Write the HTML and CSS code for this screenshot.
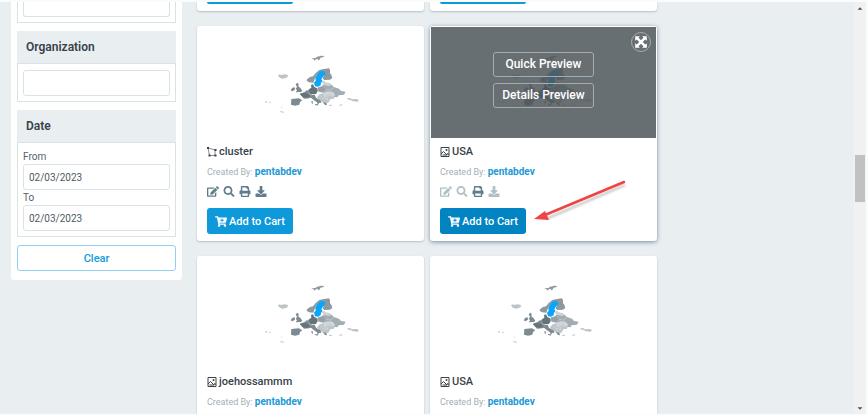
FILE: index.html
```html
<!DOCTYPE html>
<html lang="en">
<head>
    <meta charset="UTF-8">
    <meta name="viewport" content="width=device-width, initial-scale=1.0">
    <title>Add to Cart</title>
    <link rel="stylesheet" href="styles.css">
</head>
<body>

    <!-- Shared icons -->
    <svg class="sprite" aria-hidden="true">
        <symbol id="edit" viewBox="0 0 576 512"><path d="M402.6 83.2l90.2 90.2c3.8 3.8 3.8 10 0 13.8L274.4 405.6l-92.8 10.3c-12.4 1.4-22.9-9.1-21.5-21.5l10.3-92.8L388.8 83.2c3.8-3.8 10-3.8 13.8 0zm162-22.9l-48.8-48.8c-15.2-15.2-39.9-15.2-55.2 0l-35.4 35.4c-3.8 3.8-3.8 10 0 13.8l90.2 90.2c3.8 3.8 10 3.8 13.8 0l35.4-35.4c15.2-15.3 15.2-40 0-55.2zM384 346.2V448H64V128h229.8c3.2 0 6.2-1.3 8.5-3.5l40-40c7.6-7.6 2.2-20.5-8.5-20.5H48C21.5 64 0 85.5 0 112v352c0 26.5 21.5 48 48 48h352c26.5 0 48-21.5 48-48V306.2c0-10.7-12.9-16-20.5-8.5l-40 40c-2.2 2.3-3.5 5.3-3.5 8.5z"/></symbol>
        <symbol id="search" viewBox="0 0 512 512"><path d="M505 442.7L405.3 343c-4.5-4.5-10.6-7-17-7H372c27.6-35.3 44-79.7 44-128C416 93.1 322.9 0 208 0S0 93.1 0 208s93.1 208 208 208c48.3 0 92.7-16.4 128-44v16.3c0 6.4 2.5 12.5 7 17l99.7 99.7c9.4 9.4 24.6 9.4 33.9 0l28.3-28.3c9.4-9.4 9.4-24.6.1-34zM208 336c-70.7 0-128-57.2-128-128 0-70.7 57.2-128 128-128 70.7 0 128 57.2 128 128 0 70.7-57.2 128-128 128z"/></symbol>
        <symbol id="print" viewBox="0 0 512 512"><path d="M448 192V77.25c0-8.49-3.37-16.62-9.37-22.63L393.37 9.37c-6-6-14.14-9.37-22.63-9.37H96C78.33 0 64 14.33 64 32v160c-35.35 0-64 28.65-64 64v112c0 8.84 7.16 16 16 16h48v96c0 17.67 14.33 32 32 32h320c17.67 0 32-14.33 32-32v-96h48c8.84 0 16-7.16 16-16V256c0-35.35-28.65-64-64-64zm-64 256H128v-96h256v96zm0-224H128V64h192v48c0 8.84 7.16 16 16 16h48v96z"/></symbol>
        <symbol id="download" viewBox="0 0 512 512"><path d="M216 0h80c13.3 0 24 10.7 24 24v168h87.7c17.8 0 26.7 21.5 14.1 34.1L269.7 378.3c-7.5 7.5-19.8 7.5-27.3 0L90.1 226.1c-12.6-12.6-3.7-34.1 14.1-34.1H192V24c0-13.3 10.7-24 24-24zm296 376v112c0 13.3-10.7 24-24 24H24c-13.3 0-24-10.7-24-24V376c0-13.3 10.7-24 24-24h146.7l49 49c20.1 20.1 52.5 20.1 72.6 0l49-49H488c13.3 0 24 10.7 24 24z"/></symbol>
        <symbol id="cart" viewBox="0 0 576 512"><path d="M504.717 320H211.572l6.545 32h268.418c15.401 0 26.816 14.301 23.403 29.319l-5.517 24.276C523.112 414.668 536 433.828 536 456c0 31.202-25.519 56.444-56.824 55.994-29.823-.429-54.35-24.631-55.155-54.447-.44-16.287 6.085-31.049 16.803-41.548H231.176C241.553 426.165 248 440.326 248 456c0 31.813-26.528 57.431-58.67 55.938-28.54-1.325-51.751-24.385-53.251-52.917-1.158-22.034 10.436-41.455 28.051-51.586L93.883 64H24C10.745 64 0 53.255 0 40V24C0 10.745 10.745 0 24 0h102.529c11.401 0 21.228 8.021 23.513 19.19L159.208 64H551.99c15.401 0 26.816 14.301 23.403 29.319l-47.273 208C525.637 312.246 515.923 320 504.717 320zM408 168h-48v-40c0-8.837-7.163-16-16-16h-16c-8.837 0-16 7.163-16 16v40h-48c-8.837 0-16 7.163-16 16v16c0 8.837 7.163 16 16 16h48v40c0 8.837 7.163 16 16 16h16c8.837 0 16-7.163 16-16v-40h48c8.837 0 16-7.163 16-16v-16c0-8.837-7.163-16-16-16z"/></symbol>
        <symbol id="expand" viewBox="0 0 12 12"><path d="M1 1h4L3.900 2.400 6 4.500 8.100 2.400 7 1h4v4L9.600 3.900 7.500 6l2.100 2.100L11 7v4H7l1.100-1.400L6 7.500 3.900 9.600 5 11H1V7l1.400 1.100L4.500 6 2.400 3.900 1 5z"/></symbol>
        <symbol id="vector" viewBox="0 0 20 20"><path d="M2 2l15 4M16 6v11M16 17H5M5 17L2 2" fill="none" stroke="currentColor" stroke-width="1.200"/><path d="M0 0h4v4H0zM15 4h4v4h-4zM15 15h4v4h-4zM3 15h4v4H3z"/></symbol>
        <symbol id="picture" viewBox="0 0 20 20"><path d="M2 1h16v18H2zM2 14l5-5 7 7 1-3 3 2M5 16h9" fill="none" stroke="currentColor" stroke-width="2"/><circle cx="13" cy="6" r="2"/></symbol>
        <symbol id="map" viewBox="0 0 330 222">
            <g fill="#8d999f">
                <path d="M168 40l14-1 4-4 8-1 3-2 11 1-4 4-8 1-1 5-5 3-3-5-6 3-3 3-3-5z"/>
                <path d="M156 103l9-7 9-2 8-10 11-9 14-3 15-2 3 5 0 10 4 4 3 10-7 5-18 1-4-6 5-8-2-8-8-3-11 6-7 14-5 13-13-1-7-5z"/>
            </g>
            <path fill="#0ba5fa" d="M181 98l6-12 11-9 11 3 3 8-9 8-4 7 4 5-5 5-1 8-8 4-9-1-3-11 5-6z"/>
            <g fill="#bdc5c9">
                <path d="M69 91l5-3 4 2 10-2 9 1 3 5-7 5-10 2-9-3z"/>
                <path d="M277 160l8-1 6 4 14-1 7 3-4 5-14-1-8-4-9-2zM30 170l5-2 2 4-5 1zM42 170l4 1 2 4-5-2zM73 200l6-1 10 2-5 2zM77 186l5-1-1 3zM222 180l8-1 2 3-9 1zM252 180l9-2 1 3-9 1z"/>
                <path d="M194 148l14-4 9 6 14-5 9 8-3 8-11 2-6 10-12 4-9-9-7-4-6-7z"/>
            </g>
            <path fill="#a3adb2" d="M188 129l13-6 11-9 15 3 10 9 15 5 6 7 14 2-5 9-16 2-4 6-9-2-4-9-12 4-13-6-17-3-8-5z"/>
            <path fill="#cdd3d6" d="M207 144l12-6 16 4 6 8-9 5-13-4-5 6-9-4zM200 111l8-4 4 5 12 2 5 7-8 2-15-3z"/>
            <path fill="#96a1a7" d="M190 127l18-2 7 5-2 9-17 1-10-5z"/>
            <g fill="#7d8a91">
                <path d="M109 162l23-2 10 6-7 5-2 8-13 3-12-3z"/>
                <path d="M134 146l14-4 7-6 8 2 7 7-1 9-6 6-16 1-7-7z"/>
                <path d="M122 117l6-4 3 5-1 6 7 6 5 7-4 4-16 1 4-6-4-5 4-5zM107 136l5-8 7-1 1 7-8 5z"/>
                <path d="M165 151l14-2 4 9 15 9 1 6-7 1-3 6-3-8-10-7-7-6-6-1zM205 172l9 2 2 7-6-1-4-5zM169 168l4 1 1 8-4-2zM180 177l9 1-1 4-8-3z"/>
            </g>
            <path fill="#65737a" d="M163 132l6-4-1-8 6-2 4 8 8 4 2 9-5 8-13 1-9-5-2-7zM135 148l11-5 14 4 5 7-9 5-12-3z"/>
            <path stroke="#eef1f2" stroke-width="1" fill="none" d="M187 128l2 11 6 3M208 126l5 7 14 2 10-8M213 134l-5 9 13 3M133 160l8 3M161 136l2 11 7 3M207 146l4 15M228 136l2 10 9 6M220 151l-3 14M195 151l8 10 15 2"/>
        </symbol>
    </svg>

    <div class="page">

        <!-- Filters -->
        <form class="sidebar">
            <section class="filter">
                <div class="filter-body cut"><input type="text" aria-label="Filter"></div>
            </section>
            <section class="filter">
                <h2><label for="organization">Organization</label></h2>
                <div class="filter-body"><input type="text" id="organization"></div>
            </section>
            <section class="filter">
                <h2>Date</h2>
                <div class="filter-body">
                    <label for="from">From</label>
                    <input type="text" id="from" value="02/03/2023">
                    <label for="to">To</label>
                    <input type="text" id="to" value="02/03/2023">
                </div>
            </section>
            <button type="reset" class="clear">Clear</button>
        </form>

        <!-- Results -->
        <main class="results">
            <div class="cards">
                <article class="card card-end"><button class="cart" aria-label="Cart"></button></article>
                <article class="card card-end"><button class="cart" aria-label="Cart"></button></article>

                <article class="card">
                    <div class="thumb"><svg class="map"><use href="#map"/></svg></div>
                    <div class="card-body">
                        <h3><svg class="type"><use href="#vector"/></svg>cluster</h3>
                        <p>Created By: <a href="#">pentabdev</a></p>
                        <div class="actions">
                            <button aria-label="Edit"><svg><use href="#edit"/></svg></button>
                            <button aria-label="Search"><svg><use href="#search"/></svg></button>
                            <button aria-label="Print"><svg><use href="#print"/></svg></button>
                            <button aria-label="Download"><svg><use href="#download"/></svg></button>
                        </div>
                        <button class="cart"><svg><use href="#cart"/></svg>Add to Cart</button>
                    </div>
                </article>

                <article class="card active">
                    <div class="thumb">
                        <svg class="map"><use href="#map"/></svg>
                        <div class="overlay">
                            <button>Quick Preview</button>
                            <button>Details Preview</button>
                            <button class="expand" aria-label="Expand"><svg><use href="#expand"/></svg></button>
                        </div>
                    </div>
                    <div class="card-body">
                        <h3><svg class="type"><use href="#picture"/></svg>USA</h3>
                        <p>Created By: <a href="#">pentabdev</a></p>
                        <div class="actions">
                            <button aria-label="Edit" disabled><svg><use href="#edit"/></svg></button>
                            <button aria-label="Search" disabled><svg><use href="#search"/></svg></button>
                            <button aria-label="Print"><svg><use href="#print"/></svg></button>
                            <button aria-label="Download" disabled><svg><use href="#download"/></svg></button>
                        </div>
                        <button class="cart"><svg><use href="#cart"/></svg>Add to Cart</button>
                    </div>
                    <svg class="pointer" viewBox="0 0 100 50" aria-hidden="true">
                        <path class="pointer-shadow" d="M95 9L16 43"/>
                        <path d="M94 6L15 39" stroke="#ee4444" stroke-width="2.500" stroke-linecap="round"/>
                        <path d="M4 43l11-8 4 9z" fill="#ee4444"/>
                    </svg>
                </article>

                <article class="card">
                    <div class="thumb"><svg class="map"><use href="#map"/></svg></div>
                    <div class="card-body">
                        <h3><svg class="type"><use href="#picture"/></svg>joehossammm</h3>
                        <p>Created By: <a href="#">pentabdev</a></p>
                    </div>
                </article>

                <article class="card">
                    <div class="thumb"><svg class="map"><use href="#map"/></svg></div>
                    <div class="card-body">
                        <h3><svg class="type"><use href="#picture"/></svg>USA</h3>
                        <p>Created By: <a href="#">pentabdev</a></p>
                    </div>
                </article>
            </div>
        </main>

        <!-- Scrollbar -->
        <div class="scrollbar" aria-hidden="true">
            <svg viewBox="0 0 12 12"><path d="M3 8l3-3 3 3z"/></svg>
            <div class="track-top"></div>
            <div class="handle"></div>
            <div class="track-bottom"></div>
            <svg viewBox="0 0 12 12"><path d="M3 5l3 3 3-3z"/></svg>
        </div>
    </div>

</body>
</html>
```

FILE: styles.css
```css
* {
    box-sizing: border-box;
}
body {
    margin: 0;
    font-family: Roboto, sans-serif;
    font-size: 11px;
    color: #37424a;
    background-color: #fff;
}
button, input {
    font: inherit;
}
button {
    padding: 0;
    border: none;
    background: none;
    cursor: pointer;
}
h2, h3, p {
    margin: 0;
}
svg {
    display: block;
    fill: currentColor;
}
.sprite {
    position: absolute;
    width: 0;
    height: 0;
}
.page {
    display: flex;
    align-items: flex-start;
    height: 100vh;
    overflow: hidden;
    background-color: #e9eef1;
    border: solid #fafbfb;
    border-width: 2px 2px 1px 0;
}

/* Filters */
.sidebar {
    display: flex;
    flex-direction: column;
    gap: 8px;
    flex: 0 0 20%;
    max-width: 171px;
    margin-left: 11px;
    padding: 0 6px 9px;
    background-color: #fff;
    border-radius: 0 0 3px 3px;
}
.filter h2 {
    padding: 0 9px;
    font-size: 12px;
    font-weight: 600;
    line-height: 32px;
    background-color: #e9eef1;
}
.filter-body {
    padding: 6px 5px 5px;
    border: 1px solid #dbe2e6;
}
.filter-body label {
    display: block;
    font-size: 10px;
    line-height: 15px;
    color: #56626a;
}
.filter-body input {
    display: block;
    width: 100%;
    height: 26px;
    padding: 0 5px;
    font-size: 10px;
    color: #4e5a62;
    background-color: #fff;
    border: 1px solid #dbe2e6;
    border-radius: 3px;
}
.filter-body.cut {
    padding-top: 0;
    border-top: none;
}
.filter-body.cut input {
    height: 15px;
    border-top: none;
    border-radius: 0 0 3px 3px;
}
.clear {
    height: 26px;
    font-weight: 500;
    color: #129bdb;
    border: 1px solid #8fd0ef;
    border-radius: 3px;
}

/* Results */
.results {
    flex: 1;
    margin-left: 15px;
}
.cards {
    display: grid;
    grid-template-columns: repeat(2, minmax(0, 1fr));
    gap: 15px 6px;
    width: 70%;
}
.card {
    position: relative;
    min-height: 215px;
    background-color: #fff;
    border-radius: 3px;
    box-shadow: 0 1px 2px rgba(60, 90, 105, 0.3);
}
.card-end {
    min-height: 0;
    padding: 0 10px 7px;
    border-radius: 0 0 3px 3px;
}
.card.active {
    box-shadow: 0 1px 4px rgba(40, 75, 95, 0.6);
}
.thumb {
    position: relative;
    display: flex;
    align-items: center;
    justify-content: center;
    height: 112px;
}
.map {
    width: 110px;
    height: 74px;
}
.overlay {
    position: absolute;
    inset: 1px 1px 0;
    display: flex;
    flex-direction: column;
    align-items: center;
    justify-content: center;
    gap: 6px;
    padding-bottom: 6px;
    background-color: rgba(75, 84, 87, 0.84);
}
.overlay button {
    width: 101px;
    height: 25px;
    font-size: 12px;
    font-weight: 500;
    color: #fff;
    border: 1px solid #a6acae;
    border-radius: 3px;
}
.overlay .expand {
    position: absolute;
    top: 5px;
    right: 5px;
    display: grid;
    place-items: center;
    width: 20px;
    height: 20px;
    border-radius: 50%;
}
.expand svg {
    width: 14px;
    height: 14px;
}
.card-body {
    padding: 4px 10px 7px;
}
.card h3 {
    display: flex;
    align-items: center;
    gap: 2px;
    font-size: 11px;
    font-weight: 500;
    line-height: 20px;
}
.type {
    width: 10px;
    height: 10px;
}
.card p {
    font-size: 9px;
    line-height: 20px;
    color: #a3afb6;
}
.card p a {
    font-size: 10px;
    font-weight: 700;
    color: #2099d5;
    text-decoration: none;
}
.actions {
    display: flex;
    align-items: center;
    gap: 4px;
    height: 18px;
    margin-bottom: 8px;
}
.actions button {
    color: #607d8b;
}
.actions button:disabled {
    color: #b0bec5;
}
.actions svg {
    width: 12px;
    height: 11px;
}
.cart {
    display: flex;
    align-items: center;
    justify-content: center;
    gap: 2px;
    width: 86px;
    height: 26px;
    font-weight: 500;
    color: #fff;
    background-color: #0d99da;
    border-radius: 3px;
}
.cart svg {
    width: 12px;
    height: 11px;
}
.card-end .cart {
    height: 2px;
    border-radius: 0 0 3px 3px;
}
.active .cart {
    background-color: #0284c3;
}

/* Red arrow over the card */
.pointer {
    position: absolute;
    top: 150px;
    left: 100px;
    width: 100px;
    height: 50px;
}
.pointer-shadow {
    stroke: #999;
    stroke-width: 2;
    opacity: 0.6;
    filter: blur(1px);
}

/* Scrollbar */
.scrollbar {
    display: flex;
    flex-direction: column;
    align-self: stretch;
    width: 12px;
    padding: 0 1px;
    color: #505050;
    background-color: #f1f1f1;
}
.scrollbar svg {
    width: 10px;
    height: 12px;
}
.track-top {
    flex: 141;
}
.handle {
    flex: 47;
    background-color: #c1c1c1;
}
.track-bottom {
    flex: 200;
}
```
